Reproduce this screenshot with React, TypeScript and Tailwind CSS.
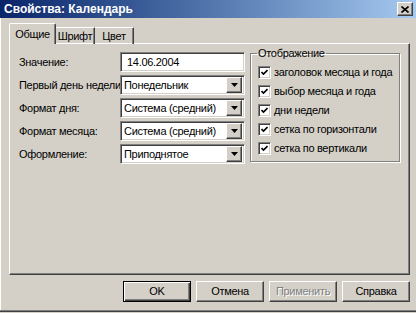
import React from "react";

const rows = [
  { label: "Значение:", value: "14.06.2004", kind: "input" },
  { label: "Первый день недели", value: "Понедельник", kind: "select" },
  { label: "Формат дня:", value: "Система (средний)", kind: "select" },
  { label: "Формат месяца:", value: "Система (средний)", kind: "select" },
  { label: "Оформление:", value: "Приподнятое", kind: "select" },
];

const options = [
  "заголовок месяца и года",
  "выбор месяца и года",
  "дни недели",
  "сетка по горизонтали",
  "сетка по вертикали",
];

const raised =
  "border-t border-l border-white border-r border-b border-r-[#404040] border-b-[#404040] shadow-[inset_-1px_-1px_#808080]";
const sunken =
  "border-t border-l border-[#808080] border-r border-b border-r-white border-b-white shadow-[inset_1px_1px_#404040,inset_-1px_-1px_#d4d0c8]";

const Arrow = () => (
  <div className={`w-[16px] h-[16px] shrink-0 bg-[#d4d0c8] flex items-center justify-center ${raised}`}>
    <svg width="7" height="4" viewBox="0 0 7 4">
      <path d="M0 0h7L3.5 4z" fill="#000" />
    </svg>
  </div>
);

const Check = () => (
  <div className={`w-[13px] h-[13px] shrink-0 bg-white flex items-center justify-center ${sunken}`}>
    <svg width="7" height="7" viewBox="0 0 7 7">
      <path d="M0.5 3 L2.5 5 L6.5 1" stroke="#000" strokeWidth="1.6" fill="none" />
    </svg>
  </div>
);

const Button = ({ children, def, disabled }: { children: React.ReactNode; def?: boolean; disabled?: boolean }) => (
  <div
    className={`w-[68px] h-[21px] flex items-center justify-center ${
      def
        ? "border border-black shadow-[inset_1px_1px_#fff,inset_-1px_-1px_#404040,inset_-2px_-2px_#808080]"
        : raised
    } ${disabled ? "text-[#808080] [text-shadow:1px_1px_0_#fff]" : "text-black"}`}
  >
    {children}
  </div>
);

export default function App() {
  return (
    <div className="w-[416px] h-[313px] bg-[#d4d0c8] flex flex-col text-[11px] leading-[13px] tracking-[-0.3px] text-black font-['Liberation_Sans',Arial,sans-serif] overflow-hidden">
      {/* Title bar */}
      <div className="h-[18px] shrink-0 flex items-center justify-between pl-[4px] pr-[3px] bg-gradient-to-r from-[#0a246a] to-[#a6caf0]">
        <span className="text-white font-bold text-[12px] tracking-normal">Свойства: Календарь</span>
        <div className={`w-[16px] h-[14px] bg-[#d4d0c8] flex items-center justify-center ${raised}`}>
          <svg width="8" height="7" viewBox="0 0 8 7">
            <path d="M0.5 0.5 L7.5 6.5 M7.5 0.5 L0.5 6.5" stroke="#000" strokeWidth="1.6" />
          </svg>
        </div>
      </div>

      <div className="flex-1 flex flex-col pl-[8px] pr-[7px] pt-[6px] border-l border-l-white">
        {/* Tabs */}
        <div className="h-[20px] flex items-end relative z-10 -mb-px">
          <div className="w-[47px] h-[21px] bg-[#d4d0c8] border-t border-l border-white border-r border-r-[#404040] shadow-[inset_-1px_0_#808080] rounded-t-[2px] flex items-center justify-center">
            Общие
          </div>
          <div className="w-[39px] h-[17px] border-t border-white border-r border-r-[#404040] shadow-[inset_-1px_0_#808080] flex items-center justify-center">
            Шрифт
          </div>
          <div className="w-[39px] h-[17px] border-t border-white border-r border-r-[#404040] shadow-[inset_-1px_0_#808080] flex items-center justify-center">
            Цвет
          </div>
        </div>

        {/* Panel */}
        <div className={`h-[232px] w-[401px] flex pl-[9px] pt-[3px] ${raised}`}>
          <div className="flex flex-col gap-[3px] mt-[5px]">
            {rows.map((r) => (
              <div key={r.label} className="h-[20px] flex items-center">
                <div className="w-[101px] shrink-0 whitespace-nowrap">{r.label}</div>
                {r.kind === "input" ? (
                  <div className={`w-[125px] h-[20px] bg-white flex items-center pl-[6px] ${sunken}`}>{r.value}</div>
                ) : (
                  <div className={`w-[125px] h-[20px] bg-white flex items-center justify-between pl-[3px] pr-[2px] ${sunken}`}>
                    <span className="whitespace-nowrap">{r.value}</span>
                    <Arrow />
                  </div>
                )}
              </div>
            ))}
          </div>

          <fieldset className="ml-[5px] w-[148px] h-[115px] border border-[#808080] shadow-[1px_1px_#fff,inset_1px_1px_#fff] px-[7px] pb-[6px]">
            <legend className="px-[1px] -ml-px">Отображение</legend>
            <div className="flex flex-col gap-[6px] pt-[6px]">
              {options.map((o) => (
                <div key={o} className="h-[13px] flex items-center gap-[3px] whitespace-nowrap">
                  <Check />
                  <span>{o}</span>
                </div>
              ))}
            </div>
          </fieldset>
        </div>

        {/* Buttons */}
        <div className="mt-[6px] w-[401px] flex justify-end gap-[5px]">
          <Button def>OK</Button>
          <Button>Отмена</Button>
          <Button disabled>Применить</Button>
          <Button>Справка</Button>
        </div>
      </div>
      <div className="h-[1px] bg-[#808080] shrink-0" />
      <div className="h-[1px] bg-[#404040] shrink-0 mb-[1px]" />
    </div>
  );
}
